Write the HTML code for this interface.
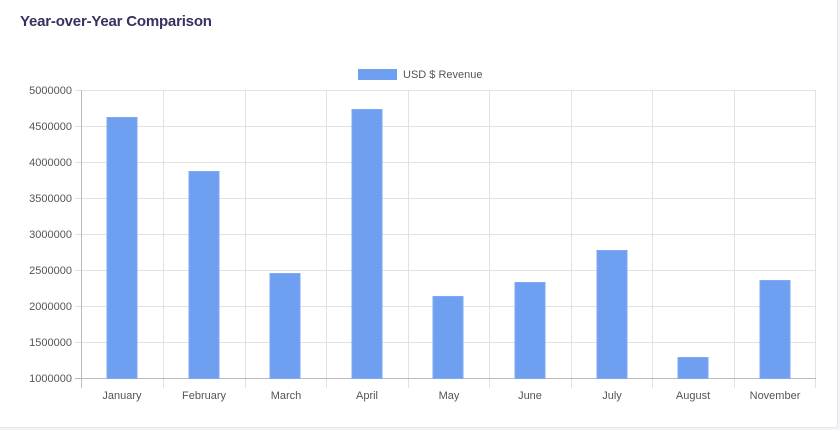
<!DOCTYPE html>
<html><head><style>
body{margin:0;background:#f4f4f8;width:840px;height:430px;overflow:hidden;font-family:"Liberation Sans",sans-serif}
.card{position:absolute;left:0;top:0;width:837px;height:427px;background:#fff;border:1px solid #e6e6ef;border-top:none;border-left:none;border-radius:0 0 4px 0}
.t{position:absolute;left:20px;top:13px;font-size:15px;font-weight:bold;color:#35325f;letter-spacing:-0.2px}
</style></head><body>
<div class="card"></div>
<div class="t">Year-over-Year Comparison</div>
<svg width="840" height="430" style="position:absolute;left:0;top:0" font-family="Liberation Sans, sans-serif" font-size="11" fill="#555">
<g stroke="#e2e2e2" stroke-width="1">
<line x1="75" x2="816" y1="90.5" y2="90.5"/><line x1="75" x2="816" y1="126.5" y2="126.5"/><line x1="75" x2="816" y1="162.5" y2="162.5"/><line x1="75" x2="816" y1="198.5" y2="198.5"/><line x1="75" x2="816" y1="234.5" y2="234.5"/><line x1="75" x2="816" y1="270.5" y2="270.5"/><line x1="75" x2="816" y1="306.5" y2="306.5"/><line x1="75" x2="816" y1="342.5" y2="342.5"/>
<line x1="163.5" x2="163.5" y1="90" y2="388"/><line x1="245.5" x2="245.5" y1="90" y2="388"/><line x1="326.5" x2="326.5" y1="90" y2="388"/><line x1="408.5" x2="408.5" y1="90" y2="388"/><line x1="489.5" x2="489.5" y1="90" y2="388"/><line x1="571.5" x2="571.5" y1="90" y2="388"/><line x1="652.5" x2="652.5" y1="90" y2="388"/><line x1="734.5" x2="734.5" y1="90" y2="388"/><line x1="815.5" x2="815.5" y1="90" y2="388"/>
</g>
<g stroke="#bbb"><line x1="75" x2="816" y1="378.5" y2="378.5"/><line x1="81.5" x2="81.5" y1="90" y2="388"/></g>
<g fill="#6f9ff0" stroke="#7fa9f2" stroke-width="1">
<rect x="107" y="117.5" width="30" height="261"/>
<rect x="189" y="171.5" width="30" height="207"/>
<rect x="270" y="273.5" width="30" height="105"/>
<rect x="352" y="109.5" width="30" height="269"/>
<rect x="433" y="296.5" width="30" height="82"/>
<rect x="515" y="282.5" width="30" height="96"/>
<rect x="597" y="250.5" width="30" height="128"/>
<rect x="678" y="357.5" width="30" height="21"/>
<rect x="760" y="280.5" width="30" height="98"/>
</g>
<g text-anchor="end">
<text x="72" y="94">5000000</text><text x="72" y="130">4500000</text><text x="72" y="166">4000000</text><text x="72" y="202">3500000</text><text x="72" y="238">3000000</text><text x="72" y="274">2500000</text><text x="72" y="310">2000000</text><text x="72" y="346">1500000</text><text x="72" y="382">1000000</text>
</g>
<g text-anchor="middle">
<text x="122" y="399">January</text><text x="204" y="399">February</text><text x="286" y="399">March</text><text x="367" y="399">April</text><text x="449" y="399">May</text><text x="530" y="399">June</text><text x="612" y="399">July</text><text x="693" y="399">August</text><text x="775" y="399">November</text>
</g>
<rect x="358" y="69" width="39" height="11" fill="#6f9ff0"/>
<text x="403" y="78">USD $ Revenue</text>
</svg>
</body></html>
